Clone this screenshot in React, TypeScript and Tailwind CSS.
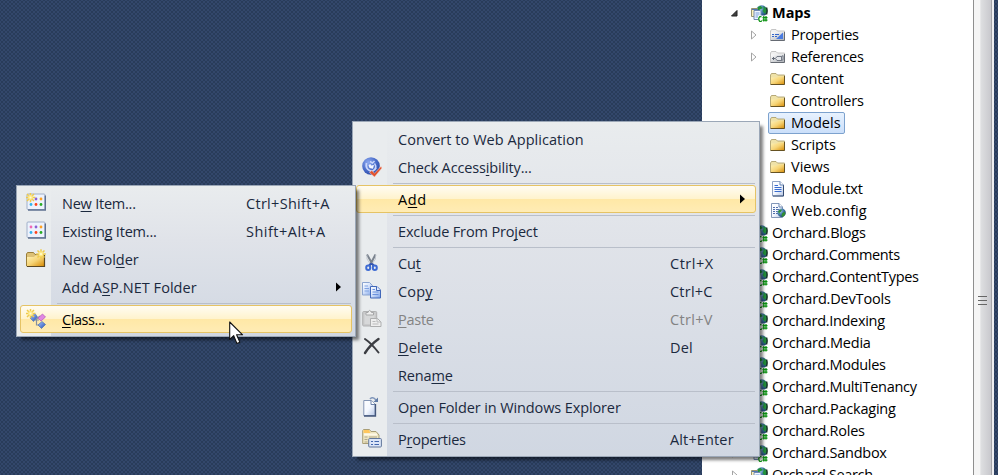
import React, { useLayoutEffect, useRef } from "react";

/* Text whose tracking is computed so that it fills a given width. */
function Fit({ w, text, k, className = "" }: { w: number; text: string; k?: number; className?: string }) {
  const ref = useRef<HTMLSpanElement>(null);
  useLayoutEffect(() => {
    const el = ref.current;
    if (!el) return;
    el.style.letterSpacing = "0px";
    const natural = el.getBoundingClientRect().width;
    el.style.letterSpacing = (w + 0.7 - natural) / text.length + "px";
  }, [w, text]);
  return (
    <span ref={ref} className={"inline-block whitespace-pre " + className}>
      {k === undefined ? text : (
        <>
          {text.slice(0, k)}
          <span className="underline decoration-1 underline-offset-2 [text-decoration-skip-ink:none]">{text[k]}</span>
          {text.slice(k + 1)}
        </>
      )}
    </span>
  );
}

function Defs() {
  return (
    <svg className="absolute" width="0" height="0">
      <defs>
        <linearGradient id="gold" x1="0" y1="0" x2="1" y2="1">
          <stop offset="0" stopColor="#fff3b8" /><stop offset=".5" stopColor="#f6d476" /><stop offset="1" stopColor="#d78b05" />
        </linearGradient>
        <linearGradient id="grey" x1="0" y1="0" x2="1" y2="1">
          <stop offset="0" stopColor="#ffffff" /><stop offset="1" stopColor="#a9adb3" />
        </linearGradient>
        <linearGradient id="paper" x1="0" y1="0" x2="1" y2="1">
          <stop offset="0" stopColor="#ffffff" /><stop offset=".5" stopColor="#f4f8ff" /><stop offset="1" stopColor="#b4c5e4" />
        </linearGradient>
        <linearGradient id="copyPaper" x1="0" y1="0" x2="1" y2="1">
          <stop offset="0" stopColor="#ffffff" /><stop offset=".4" stopColor="#dbe7fc" /><stop offset="1" stopColor="#7ba0e6" />
        </linearGradient>
        <linearGradient id="blue" x1="0" y1="0" x2="1" y2="1">
          <stop offset="0" stopColor="#a9c7ff" /><stop offset="1" stopColor="#2450b5" />
        </linearGradient>
        <radialGradient id="ball" cx=".35" cy=".3" r=".8">
          <stop offset="0" stopColor="#8eaaf0" /><stop offset=".6" stopColor="#4467c6" /><stop offset="1" stopColor="#2c479f" />
        </radialGradient>
        <radialGradient id="globe" cx=".3" cy=".3" r=".8">
          <stop offset="0" stopColor="#c2dfef" /><stop offset=".45" stopColor="#4d83b8" /><stop offset="1" stopColor="#173d66" />
        </radialGradient>
      </defs>
    </svg>
  );
}

const Svg16 = ({ children }: { children: React.ReactNode }) => (
  <svg width="16" height="16" viewBox="0 0 16 16" className="block shrink-0">{children}</svg>
);
const Svg20 = ({ children }: { children: React.ReactNode }) => (
  <svg width="20" height="20" viewBox="0 0 20 20" className="block shrink-0">{children}</svg>
);

const Folder = () => (
  <Svg16>
    <path d="M.5 13V4L1.500 2.500h4.500l1.500 1.500h7V13z" fill="#efe2a8" stroke="#a59762" strokeWidth=".8" />
    <path d="M1 6.500h6L8 5.500h6.500V13.500H1z" fill="url(#gold)" />
    <path d="M.5 13.500h14V5" fill="none" stroke="#665222" />
  </Svg16>
);
const GreyFolder = ({ children }: { children?: React.ReactNode }) => (
  <Svg16>
    <path d="M.5 13V4L1.500 2.500h4.500l1.500 1.500h7V13z" fill="#f0f0f0" stroke="#b7b7b7" strokeWidth=".8" />
    <path d="M1 5.500h13.500V13.500H1z" fill="url(#grey)" />
    <path d="M.5 13.500h14V5" fill="none" stroke="#666b73" />
    {children}
  </Svg16>
);
const PropFolder = () => (
  <GreyFolder>
    <path d="M6 12L13 5.500v6.500z" fill="#4a7be0" />
    <path d="M2 7.500h2M5 7.500h4M2 9.500h2M5 9.500h2" stroke="#3466ca" />
  </GreyFolder>
);
const RefFolder = () => (
  <GreyFolder>
    <path d="M2 9.500h3M3.500 8v3" stroke="#666c78" />
    <path d="M5.500 9.500L7 7.500h4.500v4H7zM11.500 7.500l1.500-.8v4l-1.500.8" fill="#e4e6ea" stroke="#686e7a" strokeWidth=".9" />
  </GreyFolder>
);
const TextFile = () => (
  <Svg16>
    <path d="M2.500.500h7.500L13.500 4v11H2.500z" fill="url(#paper)" stroke="#8fa3c4" />
    <path d="M13.500 4v11H3" fill="none" stroke="#354b70" />
    <path d="M10 .500V4h3.500" fill="#fff" stroke="#6582b1" />
    <path d="M4.500 4.500H8M4.500 6.500H11.500M4.500 8.500H11.500M4.500 10.500H11.500" stroke="#3b6dcf" />
  </Svg16>
);
const ConfigFile = () => (
  <Svg16>
    <path d="M1.500.500h7.500L12.500 4v10.500h-11z" fill="url(#paper)" stroke="#8297b8" />
    <path d="M9 .500V4h3.500" fill="#fff" stroke="#6582b1" />
    <path d="M3 4.500H5M6 4.500H8M3 6.500H5M6 6.500H10M3 8.500H5M6 8.500H9M3 10.500H5M6 10.500H8" stroke="#5270ab" />
    <circle cx="11.600" cy="9.800" r="4.200" fill="url(#globe)" />
    <path d="M8 8.500q1.500-2.700 4-1.800l-1 2-1.500.8v2zM12 10.500l2.500-2 1 2.500-2.500 3-1.500-1z" fill="#318d32" />
  </Svg16>
);
const CsProject = () => (
  <svg width="17" height="17" viewBox="0 0 17 17" className="block shrink-0">
    <circle cx="10.500" cy="6" r="5.800" fill="url(#globe)" />
    <path d="M5.500 4Q7 1.300 9.500.800L12 3 9 4.500 7 6zM12.500 1q3 1.500 3.500 4.500L14 9l-2.500-3 1-2z" fill="#23913b" />
    <path d="M15.500 2.500q1.200 3 0 7" fill="none" stroke="#16331f" strokeWidth="1.400" />
    <path d="M.500 3.500h6v8h-6z" fill="#fff2b9" stroke="#9a946f" />
    <path d="M1 4.500h6" stroke="#5277b0" />
    <path d="M3 5.500h6l1 1v8H3z" fill="#f0f5ff" stroke="#7188b0" />
    <path d="M4.500 8h4M4.500 10h4M4.500 12h3" stroke="#779bd9" />
    <path d="M7 10.500h9.500V17H7z" fill="#fff" />
    <path d="M10.500 12Q8.700 11 8 12.700T8.500 16t2.200-.5M12.800 11v5.500M15 11v5.500M11.500 12.500h5M11.500 15h5" fill="none" stroke="#0a9210" strokeWidth="1.250" />
  </svg>
);

const Access = () => (
  <Svg20>
    <circle cx="9" cy="9" r="8.800" fill="url(#ball)" />
    <path d="M4.500 6Q3.300 11.500 7.500 13.500T14 10.500" fill="none" stroke="#c9d6fb" strokeWidth="1.800" />
    <path d="M8 4.500l2.500 1.500 2-2M12.500 6.500q2 2.500 1 5" fill="none" stroke="#c9d6fb" strokeWidth="1.500" />
    <path d="M6.500 8l2-1 .5 1.500 3-.5-1 3.800-3.500-.8z" fill="#f3f6ff" />
    <path d="M7.500 15.500L9.800 13.500l2.700 2.700L19 9.500l1 1.500-7.500 9z" fill="#e1522d" stroke="#f6d9d0" strokeWidth=".5" />
  </Svg20>
);
const Cut = () => (
  <Svg20>
    <path d="M5 1.500L11.500 13M13.500 1.500L7.500 13" stroke="#7b838e" strokeWidth="2" />
    <path d="M5 2v4l4 6M13.500 2v4l-3.500 5" fill="none" stroke="#b9bfc8" strokeWidth=".8" />
    <path d="M9.300 10.500L7 12.500M9.300 10.500L12 12.500" stroke="#3355b0" strokeWidth="2" />
    <ellipse cx="6.200" cy="14.700" rx="2" ry="2.300" fill="none" stroke="#3e6bd3" strokeWidth="2" />
    <ellipse cx="12.800" cy="14.700" rx="2" ry="2.300" fill="none" stroke="#3e6bd3" strokeWidth="2" />
  </Svg20>
);
const Copy = () => (
  <Svg20>
    <path d="M.500 1.500h7l3 3v9.500H.500z" fill="url(#copyPaper)" stroke="#8ca5d0" />
    <path d="M2.500 5H6M2.500 7.500H7M2.500 10H7" stroke="#7fa2e2" />
    <path d="M8.500 5.500h6.500l3.500 3.500v8h-10z" fill="url(#copyPaper)" stroke="#4268b9" />
    <path d="M14.500 5.500V9.500h4" fill="#e4edff" stroke="#4268b9" />
    <path d="M10.500 8.500H13M10.500 11H16.500M10.500 13.500H16.500" stroke="#6a91dd" />
  </Svg20>
);
const Paste = () => (
  <Svg20>
    <rect x=".700" y="2.500" width="14" height="14.500" rx="1" fill="#c9cacb" stroke="#b0b1b2" />
    <path d="M2.500 5h10v10h-10z" fill="#d7d8d9" />
    <path d="M4 6V3.500h2Q7.500-.700 9.500 3.500h2V6z" fill="#eeeeee" stroke="#a6a7a8" />
    <path d="M8.500 9.500h7l3.500 3.500v4.500H8.500z" fill="#eee" stroke="#adaeaf" />
    <path d="M15 9.500V13h4M10.500 12.500h3M10.500 15h6" fill="none" stroke="#b9babb" />
  </Svg20>
);
const Delete = () => (
  <Svg20>
    <path d="M3 2Q9 6 16.500 15.500" fill="none" stroke="#3b3d42" strokeWidth="2" strokeLinecap="round" />
    <path d="M16.500 2Q8 8 3 16" fill="none" stroke="#3b3d42" strokeWidth="2.400" strokeLinecap="round" />
  </Svg20>
);
const OpenExternal = () => (
  <Svg20>
    <path d="M1.800 3.500h7.500L13 7v11.500H1.800z" fill="url(#paper)" stroke="#8395b4" />
    <path d="M13.500 7v12H2" fill="none" stroke="#43567b" strokeWidth="1.300" />
    <path d="M9 3.500V7.500h4" fill="#fff" stroke="#6c82a8" />
    <path d="M8 2Q10.500-1 14 3" fill="none" stroke="#8298bb" strokeWidth="1.500" />
    <path d="M16 .500V5H11.500z" fill="#5f7aa6" />
  </Svg20>
);
const PropertiesIcon = () => (
  <Svg20>
    <path d="M.700 14.500V1.500L1.500.500h6L9 2.500h5L17 6v8.500z" fill="#ede5c1" stroke="#a99e76" />
    <path d="M1.500 1h5.500l1.500 3h-7z" fill="#ffc75e" />
    <path d="M2 5.500h13" stroke="#fff9e7" strokeWidth="2" />
    <path d="M2.500 8h3M2.500 10.500h3M2.500 13h3M7 8h8" stroke="#b2a98c" />
    <rect x="6.700" y="9.500" width="12.700" height="8.500" rx="1" fill="#dbe5f8" stroke="#62779b" />
    <path d="M9 12.500H11M12.500 12.500H17M9 15.500H11M12.500 15.500H17" stroke="#4267ae" strokeWidth="1.200" />
  </Svg20>
);
const Star = ({ x, y }: { x: number; y: number }) => (
  <g transform={`translate(${x} ${y})`}>
    <path d="M0-4.800V4.800M-4.800 0H4.800M-3.500-3.500L3.500 3.500M3.500-3.500L-3.500 3.500" stroke="#efcb4c" strokeWidth="1.500" />
    <circle r="2.400" fill="#ffe987" /><circle r="1" fill="#fffbd8" />
  </g>
);
const ItemGrid = ({ star = false }: { star?: boolean }) => (
  <Svg20>
    <rect x="1" y="1" width="18" height="15.500" rx="1" fill="#edf2fd" stroke="#a0b0ca" />
    <path d="M2 17h17.300V2.500" fill="none" stroke="#5d7090" strokeWidth="1.400" />
    <g>
      <circle cx="5" cy="6" r="1.400" fill="#f169b4" /><circle cx="10" cy="6" r="1.400" fill="#8b60d4" /><circle cx="15" cy="6" r="1.400" fill="#ffa120" />
      <circle cx="5" cy="11.500" r="1.400" fill="#31b3ef" /><circle cx="10" cy="11.500" r="1.400" fill="#ff431b" /><circle cx="15" cy="11.500" r="1.400" fill="#28ac24" />
    </g>
    {star && <Star x={4.500} y={4.500} />}
  </Svg20>
);
const NewFolder = () => (
  <Svg20>
    <path d="M.500 17V5l1-1.500H7.500L9 5.500h9V17z" fill="#ddc176" stroke="#9a7e38" />
    <path d="M1 8h7l1.500-1.500H18V17H1z" fill="url(#gold)" />
    <path d="M1 17.500h17.500V6" fill="none" stroke="#5b4721" strokeWidth="1.200" />
    <Star x={15} y={5} />
  </Svg20>
);
const ClassIcon = () => (
  <Svg20>
    <path d="M9 11H13M10.500 10V16H13M10.500 10L14 7" fill="none" stroke="#85909f" strokeWidth="1.200" />
    <path d="M4 9l3.500 3.500L11.500 8 9 4.500z" fill="url(#blue)" stroke="#4e71aa" strokeWidth=".6" />
    <path d="M12 9l4.500-4L19.500 8l-4.500 4z" fill="#e187e2" stroke="#b156ba" strokeWidth=".7" />
    <path d="M12 16l4-3.500 3.500 3-4 4z" fill="url(#blue)" stroke="#4e71aa" strokeWidth=".7" />
    <Star x={4.500} y={4.500} />
  </Svg20>
);

type Item = { t: string; w: number; k?: number; s?: string; sw?: number; icon?: React.ReactNode; off?: boolean; hot?: boolean; sub?: boolean } | null;

const contextItems: Item[] = [
  { t: "Convert to Web Application", w: 185 },
  { t: "Check Accessibility...", w: 133, k: 12, icon: <Access /> },
  null,
  { t: "Add", w: 28, k: 1, hot: true, sub: true },
  null,
  { t: "Exclude From Project", w: 139, k: 16 },
  null,
  { t: "Cut", w: 22, k: 2, s: "Ctrl+X", sw: 43, icon: <Cut /> },
  { t: "Copy", w: 34, k: 3, s: "Ctrl+C", sw: 42, icon: <Copy /> },
  { t: "Paste", w: 35, k: 0, s: "Ctrl+V", sw: 42, off: true, icon: <Paste /> },
  { t: "Delete", w: 44, k: 0, s: "Del", sw: 22, icon: <Delete /> },
  { t: "Rename", w: 54, k: 4 },
  null,
  { t: "Open Folder in Windows Explorer", w: 222, icon: <OpenExternal /> },
  null,
  { t: "Properties", w: 67, k: 1, s: "Alt+Enter", sw: 63, icon: <PropertiesIcon /> },
];
const addItems: Item[] = [
  { t: "New Item...", w: 73, k: 2, s: "Ctrl+Shift+A", sw: 83, icon: <ItemGrid star /> },
  { t: "Existing Item...", w: 94, k: 7, s: "Shift+Alt+A", sw: 79, icon: <ItemGrid /> },
  { t: "New Folder", w: 76, k: 7, icon: <NewFolder /> },
  { t: "Add ASP.NET Folder", w: 134, k: 5, sub: true },
  null,
  { t: "Class...", w: 42, k: 0, hot: true, icon: <ClassIcon /> },
];

function Menu({ items, className, shortcutClass }: { items: Item[]; className: string; shortcutClass: string }) {
  return (
    <div className={"absolute border border-[#9ba7b7] bg-[linear-gradient(90deg,#e9ecee_34px,transparent_34px),linear-gradient(#e9ecee,#e0e3e9_36%,#d0d7e2)] px-[3px] pt-[3px] shadow-[4px_4px_3px_-1px_rgba(0,0,0,0.5)] " + className}>
      {items.map((it, i) =>
        it === null ? (
          <div key={i} className="flex h-1 items-center pt-px pr-px pl-[37px]"><div className="h-px w-full bg-[#b9bfca]" /></div>
        ) : (
          <div
            key={i}
            className={
              "flex h-7 items-center rounded-[3px] border pl-[5px] " +
              (it.hot ? "border-[#e5c365] bg-[linear-gradient(#fffcf2,#fff3cd_49%,#ffe8a6_50%,#ffecb5)] text-black" : "border-transparent " + (it.off ? "text-[#838383]" : "text-[#1b293e]"))
            }
          >
            <div className="h-5 w-5 shrink-0">{it.icon}</div>
            <div className="flex-1 pt-[2px] pl-4"><Fit text={it.t} w={it.w} k={it.k} /></div>
            {it.s && <div className={"pt-[2px] " + shortcutClass}><Fit text={it.s} w={it.sw!} /></div>}
            {it.sub && <svg width="5" height="10" viewBox="0 0 5 10" className="mr-[10px]"><path d="M0 .500L5 5 0 9.500z" fill="#000" /></svg>}
          </div>
        ),
      )}
    </div>
  );
}

type Node = { t: string; w: number; icon: React.ReactNode; open?: boolean; sel?: boolean };
const children: Node[] = [
  { t: "Properties", w: 67, icon: <PropFolder />, open: true },
  { t: "References", w: 72, icon: <RefFolder />, open: true },
  { t: "Content", w: 52, icon: <Folder /> },
  { t: "Controllers", w: 72, icon: <Folder /> },
  { t: "Models", w: 49, icon: <Folder />, sel: true },
  { t: "Scripts", w: 44, icon: <Folder /> },
  { t: "Views", w: 38, icon: <Folder /> },
  { t: "Module.txt", w: 71, icon: <TextFile /> },
  { t: "Web.config", w: 75, icon: <ConfigFile /> },
];
const projects: [string, number][] = [
  ["Orchard.Blogs", 93], ["Orchard.Comments", 127], ["Orchard.ContentTypes", 146], ["Orchard.DevTools", 118],
  ["Orchard.Indexing", 112], ["Orchard.Media", 98], ["Orchard.Modules", 113], ["Orchard.MultiTenancy", 144],
  ["Orchard.Packaging", 123], ["Orchard.Roles", 92], ["Orchard.Sandbox", 114], ["Orchard.Search", 100],
];
const Expander = () => (
  <svg width="6" height="10" viewBox="0 0 6 10" className="block"><path d="M.500 1L5 5 .500 9z" fill="#fff" stroke="#a4a4a4" /></svg>
);

export default function App() {
  return (
    <div className="relative flex h-[475px] w-[998px] overflow-hidden bg-[#33476b] bg-[radial-gradient(#293c5a_0.8px,transparent_1px),radial-gradient(#293c5a_0.8px,transparent_1px)] [background-position:0_0,2px_2px] bg-size-[4px_4px] font-['Open_Sans','Noto_Sans',sans-serif] text-[14.5px] leading-5">
      <Defs />
      <div className="flex-1" />
      <aside className="mr-1 flex h-full w-[292px] shrink-0 bg-white text-black">
        <div className="w-[271px] pt-[2px]">
          <div className="flex h-[22px] items-center pl-[29px]">
            <svg width="7" height="7" viewBox="0 0 7 7" className="mr-[13px]"><path d="M6 .500V6H.500z" fill="#404040" stroke="#222" /></svg>
            <CsProject />
            <div className="pl-1 font-bold"><Fit text="Maps" w={38} /></div>
          </div>
          {children.map((n) => (
            <div key={n.t} className="flex h-[22px] items-center pl-[49px]">
              <div className="w-[17px]">{n.open && <Expander />}</div>
              <div className={"flex h-[22px] items-center rounded-[2px] border pr-[3px] pl-[1px] " + (n.sel ? "border-[#7da2ce] bg-linear-to-b from-[#e8f2fe] to-[#cbdffa]" : "border-transparent")}>
                {n.icon}
                <div className="pl-[5px]"><Fit text={n.t} w={n.w} /></div>
              </div>
            </div>
          ))}
          {projects.map(([t, w]) => (
            <div key={t} className="flex h-[22px] items-center pl-[30px]">
              <div className="w-[19px]"><Expander /></div>
              <CsProject />
              <div className="pl-1"><Fit text={t} w={w} /></div>
            </div>
          ))}
        </div>
        <div className="flex w-[19px] flex-col items-center border-x border-l-[#8f8f8f] border-r-[#a5a5aa] bg-linear-to-r from-[#f5f5f5] from-35% via-[#dedfe1] via-40% to-[#c8c8cd] pt-[296px]">
          <div className="flex flex-col gap-[3px]">
            <div className="h-px w-[9px] bg-[#666]" /><div className="h-px w-[9px] bg-[#666]" /><div className="h-px w-[9px] bg-[#666]" />
          </div>
        </div>
        <div className="flex-1 bg-[#eeeef1]" />
      </aside>

      <Menu items={contextItems} className="top-[121px] left-[352px] h-[336px] w-[408px]" shortcutClass="w-[85px]" />
      <Menu items={addItems} className="top-[185px] left-[16px] h-[152px] w-[340px]" shortcutClass="w-[105px]" />

      <svg width="16" height="25" viewBox="0 0 16 25" className="absolute top-[321px] left-[229px]">
        <path d="M.700 1V18.500l4-3.800 3.200 7.800 3-1.300-3.300-7.400h6z" fill="#fff" stroke="#111" strokeWidth="1.100" strokeLinejoin="round" />
      </svg>
    </div>
  );
}
